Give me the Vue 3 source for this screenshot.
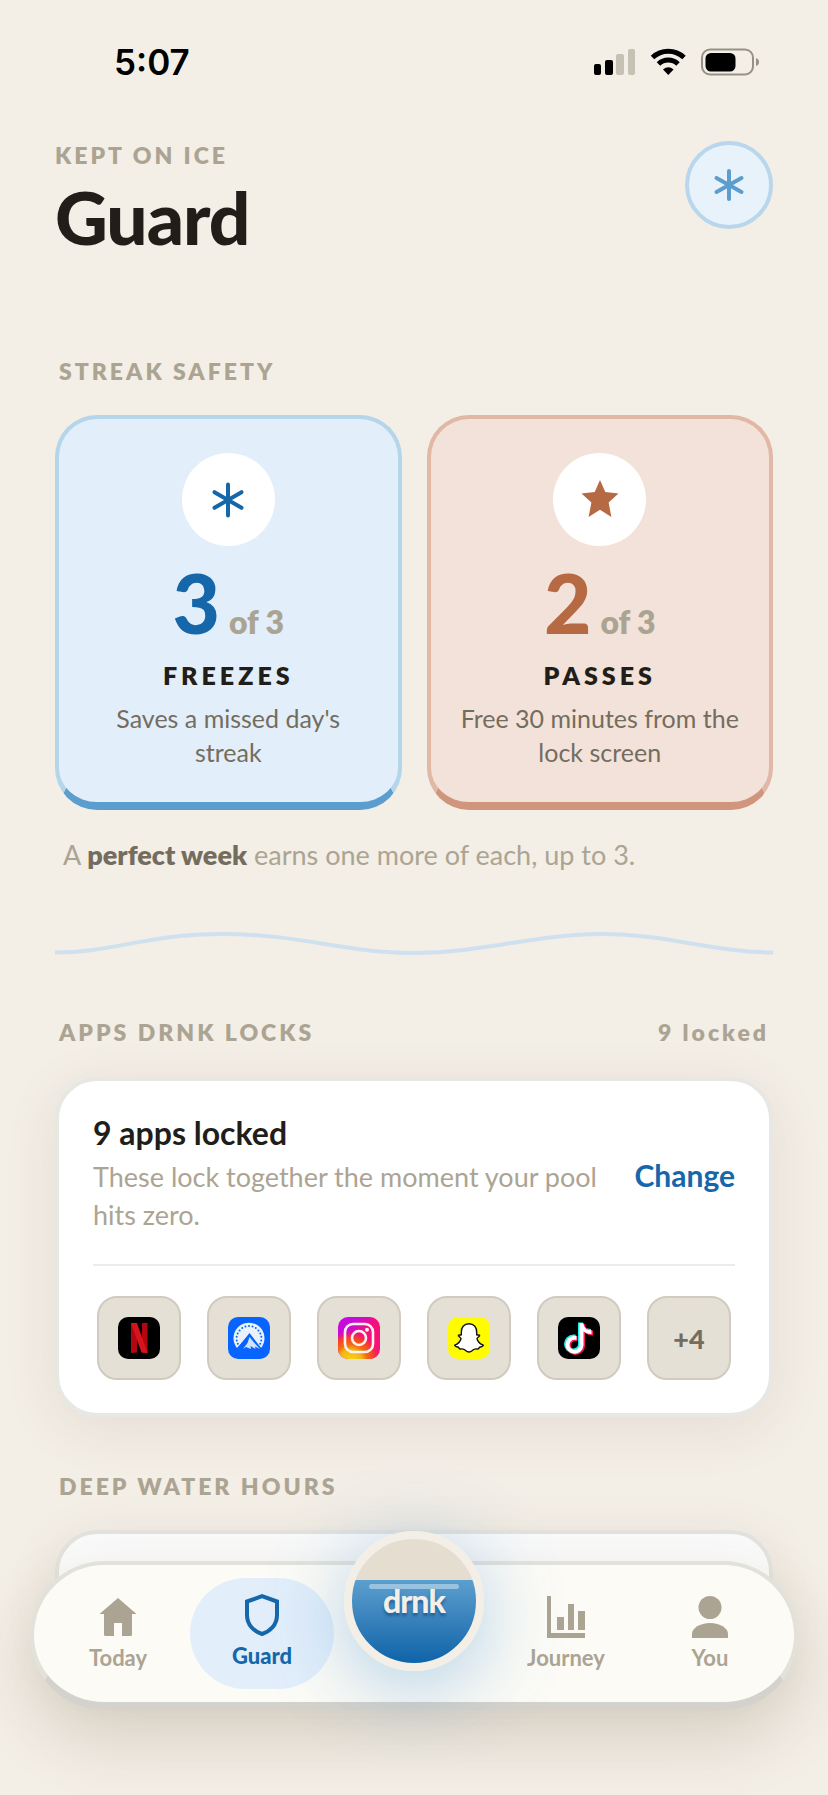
<script setup>
const safety = [
  { id: 'freeze', count: 3, label: 'Freezes', text: "Saves a missed day's streak" },
  { id: 'pass', count: 2, label: 'Passes', text: 'Free 30 minutes from the lock screen' }
]
const dots = Array.from({ length: 15 }, (_, i) => {
  const a = Math.PI * (1.14 - (i * 1.28) / 14)
  return { x: 21 + 12.4 * Math.cos(a), y: 21.5 - 12.4 * Math.sin(a) }
})
</script>

<template>
  <div class="screen">
    <div class="status">
      <span class="time">5:07</span>
      <svg class="status-icons" viewBox="0 0 166 28" aria-hidden="true">
        <rect x="0" y="16" width="7" height="11" rx="2" />
        <rect x="11" y="12" width="8" height="15" rx="2" />
        <rect x="22" y="6" width="8" height="21" rx="2" fill="#c6c1b5" />
        <rect x="34" y="1" width="7" height="26" rx="2" fill="#c6c1b5" />
        <g fill="none" stroke="#000" stroke-width="5">
          <path d="M58.500 9.500 A23 23 0 0 1 90 9.500" />
          <path d="M64.500 16 A14 14 0 0 1 84 16" />
        </g>
        <path d="M69 21.500 Q74.300 17 79.600 21.500 L74.300 27Z" />
        <rect x="108" y="1.500" width="51" height="25" rx="8" fill="none" stroke="#979183" stroke-width="2" />
        <rect x="111.500" y="5" width="30" height="18.500" rx="5.500" />
        <path d="M162 10 Q165 11 165 14 Q165 17 162 18Z" fill="#979183" />
      </svg>
    </div>

    <main class="content">
      <header class="header">
        <div>
          <p class="caps">Kept on ice</p>
          <h1>Guard</h1>
        </div>
        <button class="ice" type="button" aria-label="Freezes">
          <svg viewBox="0 0 36 36"><path d="M18 4V32M5.500 11L30.500 25M30.500 11L5.500 25" /></svg>
        </button>
      </header>

      <h2 class="caps section first">Streak safety</h2>
      <div class="cards">
        <article v-for="s in safety" :key="s.id" class="card" :class="s.id">
          <div class="badge">
            <svg v-if="s.id === 'freeze'" viewBox="0 0 40 40" class="flake"><path d="M20 4.500V35.500M6.500 12.200L33.500 27.800M33.500 12.200L6.500 27.800" /></svg>
            <svg v-else viewBox="0 0 40 40"><path d="M20 0L25.300 12L38.500 13.500L28.600 22.500L31.400 37L20 29.700L8.600 37L11.400 22.500L1.500 13.500L14.700 12Z" /></svg>
          </div>
          <p class="count"><strong>{{ s.count }}</strong> <span>of 3</span></p>
          <h3>{{ s.label }}</h3>
          <p class="text">{{ s.text }}</p>
        </article>
      </div>
      <p class="note">A <strong>perfect week</strong> earns one more of each, up to 3.</p>

      <svg class="wave" viewBox="0 0 718 32" preserveAspectRatio="none" aria-hidden="true">
        <path d="M0 25.500C60 25.500 90 7 168 7S290 26 359 26S480 7 546 7S660 25.500 718 25.500" />
      </svg>

      <div class="row-title">
        <h2 class="caps section">Apps drnk locks</h2>
        <span class="caps locked">9 locked</span>
      </div>
      <section class="panel">
        <div class="panel-head">
          <div>
            <h3>9 apps locked</h3>
            <p>These lock together the moment your pool hits zero.</p>
          </div>
          <button type="button">Change</button>
        </div>
        <ul class="apps">
          <li>
            <svg viewBox="0 0 42 42" role="img" aria-label="Netflix">
              <rect width="42" height="42" rx="10" />
              <path d="M13 6H19V35.500L13 36ZM24 6H29.500V36L24 35.500Z" fill="#b20710" />
              <path d="M13 6H19L29.500 36L23.500 35.500Z" fill="#d5141c" />
            </svg>
          </li>
          <li>
            <svg viewBox="0 0 42 42" role="img" aria-label="Paramount+">
              <rect width="42" height="42" rx="10" fill="#0764ff" />
              <path d="M9 31A15.500 15.500 0 1 1 33 31L21.500 17Z" fill="#e9f2fb" />
              <circle v-for="(d, i) in dots" :key="i" :cx="d.x" :cy="d.y" r="1" fill="#0764ff" />
              <path d="M21.500 16L8 33H14L21 22.500L24 26L22 24.500L19 31H33Z" fill="#0764ff" />
              <path d="M21.500 20L26 25.500L32 32L27 29.500L27.500 32L22.500 29L23 32L18 30L15 32L19.500 26Z" fill="#cfe3f8" />
            </svg>
          </li>
          <li>
            <svg viewBox="0 0 42 42" role="img" aria-label="Instagram">
              <defs>
                <linearGradient id="ig-a" x1="0" y1="0" x2="1" y2="1">
                  <stop offset="0.250" stop-color="#c80bdc" /><stop offset="0.500" stop-color="#f50f78" /><stop offset="0.850" stop-color="#f5127a" />
                </linearGradient>
                <radialGradient id="ig-b" cx="0.300" cy="1.050" r="0.720">
                  <stop offset="0" stop-color="#f8d90c" /><stop offset="0.380" stop-color="#f0b51a" /><stop offset="0.550" stop-color="#f56a10" /><stop offset="0.800" stop-color="#f53a30" /><stop offset="1" stop-color="#f5127a" stop-opacity="0" />
                </radialGradient>
              </defs>
              <rect width="42" height="42" rx="10" fill="url(#ig-a)" />
              <rect width="42" height="42" rx="10" fill="url(#ig-b)" />
              <g fill="none" stroke="#fff2ee" stroke-width="2.600">
                <rect x="7" y="7" width="28" height="28" rx="8" />
                <circle cx="21" cy="21" r="7" />
              </g>
              <circle cx="29" cy="12.800" r="2" fill="#fff2ee" />
            </svg>
          </li>
          <li>
            <svg viewBox="0 0 42 42" role="img" aria-label="Snapchat">
              <rect width="42" height="42" rx="10" fill="#fffc00" />
              <path d="M21 6.800C16 6.800 13 10.300 13.300 15.500V17.800C12.200 18.300 11 17.600 10.400 18.300C9.800 19.300 13 20.500 13 21.700C12.200 24.500 9.700 27 6.700 28.100C6.500 29.700 9.700 29.900 10.700 30.300C11 31.200 11 32 12 32C13 32 14.500 31.500 16.300 32.500C17.700 33.500 19 35 21 35S24.300 33.500 25.700 32.500C27.500 31.500 29 32 30 32S31 31.200 31.300 30.300C32.300 29.900 35.500 29.700 35.300 28.100C32.300 27 29.800 24.500 29 21.700C29 20.500 32.200 19.300 31.600 18.300C31 17.600 29.800 18.300 28.700 17.800V15.500C29 10.300 26 6.800 21 6.800Z" fill="#fff" stroke="#111" stroke-width="1.400" stroke-linejoin="round" />
            </svg>
          </li>
          <li>
            <svg viewBox="0 0 42 42" role="img" aria-label="TikTok">
              <rect width="42" height="42" rx="10" />
              <g fill="none" stroke-width="5">
                <path d="M22.500 5.500V27.500A7 7 0 1 1 15.500 20H17.500M22.500 6C23 11.500 27.500 14.500 33 14.500" stroke="#19f0ee" />
                <path d="M24.500 7V29A7 7 0 1 1 17.500 21.500H19.500M24.500 7.500C25 13 29.500 16 35 16" stroke="#f8195a" />
                <path d="M23.500 6.200V28.200A7 7 0 1 1 16.500 20.700H18.500M23.500 6.700C24 12.200 28.500 15.200 33.500 15.200" stroke="#fff" stroke-width="4" />
              </g>
            </svg>
          </li>
          <li>+4</li>
        </ul>
      </section>

      <h2 class="caps section deep">Deep water hours</h2>
      <section class="panel hours"></section>
    </main>

    <nav class="tabs">
      <a href="#today">
        <svg viewBox="0 0 44 44"><path d="M22 3L40.500 19H36V39.500Q36 41 34.500 41H26V28H18V41H9.500Q8 41 8 39.500V19H3.500Z" /></svg>
        Today
      </a>
      <a href="#guard" class="active" aria-current="page">
        <svg viewBox="0 0 44 44"><path d="M22 3.200L37 8.500V22C37 32 30 38.500 22 41C14 38.500 7 32 7 22V8.500Z" /></svg>
        Guard
      </a>
      <button class="drink" type="button"><span>drnk</span></button>
      <a href="#journey">
        <svg viewBox="0 0 44 44"><path d="M3 1H7V38H41V43H3ZM13 22H20V35H13ZM24 9H30V35H24ZM34 16H41V35H34Z" /></svg>
        Journey
      </a>
      <a href="#you">
        <svg viewBox="0 0 44 44"><circle cx="22" cy="12.500" r="11.500" /><path d="M4 43V39C4 33 12 28 22 28S40 33 40 39V43Z" /></svg>
        You
      </a>
    </nav>
  </div>
</template>

<style>
body { margin: 0; background: #f3eee6; }
</style>

<style scoped>
* { box-sizing: border-box; }
h1, h2, h3, p, ul { margin: 0; padding: 0; }
button { font: inherit; padding: 0; cursor: pointer; }
.screen {
  position: relative;
  min-height: 100vh;
  overflow: hidden;
  background: #f3eee6;
  color: #211d18;
  font-family: Lato, "Open Sans", sans-serif;
}
.status {
  display: flex;
  justify-content: space-between;
  align-items: center;
  padding: 42px 68px 0 114px;
}
.time { font: 600 35px/40px Inter, sans-serif; color: #000; }
.status-icons { width: 166px; height: 28px; }
.content { padding: 59px 55px 0; }
.header { display: flex; justify-content: space-between; align-items: flex-start; }
.caps {
  font-size: 23px;
  line-height: 28px;
  font-weight: 800;
  letter-spacing: 3px;
  text-transform: uppercase;
  color: #aca493;
}
h1 { margin-top: 8px; font-size: 73px; line-height: 80px; font-weight: 900; letter-spacing: -1px; }
.ice {
  width: 88px;
  height: 88px;
  display: grid;
  place-items: center;
  border: 4px solid #b8d6ec;
  border-radius: 50%;
  background: #e8f2fb;
}
.ice svg { width: 36px; fill: none; stroke: #5b9dcc; stroke-width: 4; stroke-linecap: round; }
.section { padding-left: 4px; }
.first { margin-top: 100px; }
.cards { display: grid; grid-template-columns: 1fr 1fr; gap: 25px; margin-top: 30px; }
.card {
  padding: 34px 24px 33px;
  border: 4px solid;
  border-bottom-width: 8px;
  border-radius: 42px;
  text-align: center;
}
.freeze { background: #e2eefa; border-color: #b5d5eb #b5d5eb #5b9dcc; }
.pass { background: #f2e2da; border-color: #e0b8a5 #e0b8a5 #cf967d; }
.badge {
  width: 93px;
  height: 93px;
  margin: 0 auto;
  display: grid;
  place-items: center;
  border-radius: 50%;
  background: #fff;
}
.badge svg { width: 40px; fill: #b56a44; }
.badge .flake { fill: none; stroke: #1567aa; stroke-width: 4; stroke-linecap: round; }
.count {
  display: flex;
  justify-content: center;
  align-items: baseline;
  gap: 9px;
  margin-top: 14px;
  font-size: 32px;
  line-height: 40px;
}
.count strong { font-size: 82px; line-height: 84px; font-weight: 900; color: #1567aa; }
.pass .count strong { color: #b56a44; }
.count span { font-weight: 800; color: #aca493; }
.card h3 { margin-top: 16px; font-size: 25px; line-height: 30px; font-weight: 800; letter-spacing: 4px; text-transform: uppercase; }
.text { margin-top: 11px; font-size: 25px; line-height: 34px; color: #746d5e; }
.note { margin: 29px 0 0 8px; font-size: 27px; line-height: 32px; color: #aca493; }
.note strong { font-weight: 800; color: #746d5e; }
.wave { display: block; width: 100%; height: 32px; margin-top: 56px; }
.wave path { fill: none; stroke: #cfe1ee; stroke-width: 4; }
.row-title { display: flex; justify-content: space-between; margin-top: 59px; }
.locked { padding-right: 4px; text-transform: none; }
.panel {
  margin-top: 31px;
  padding: 34px 34px 33px;
  border: 4px solid #e7e7e4;
  border-radius: 42px;
  background: #fff;
  box-shadow: 0 12px 56px rgba(90, 70, 40, 0.09);
}
.panel-head {
  display: flex;
  align-items: center;
  justify-content: space-between;
  gap: 32px;
  padding-bottom: 30px;
  border-bottom: 2px solid #ececea;
}
.panel h3 { font-size: 32px; line-height: 36px; font-weight: 700; }
.panel p { margin-top: 7px; font-size: 27px; line-height: 38px; color: #aca493; }
.panel-head button { border: 0; background: none; color: #1567aa; font-size: 30px; line-height: 36px; font-weight: 700; }
.apps { display: flex; justify-content: space-between; padding: 30px 4px 0; list-style: none; }
.apps li {
  width: 84px;
  height: 84px;
  display: grid;
  place-items: center;
  border: 2px solid #d1cbbf;
  border-radius: 20px;
  background: #e5e0d6;
  color: #746d5e;
  font-size: 27px;
  font-weight: 900;
}
.apps svg { width: 42px; height: 42px; }
.deep { margin-top: 55px; }
.hours { margin-top: 30px; height: 140px; background: #fafafa; border-color: #e3e3dd; }
.tabs {
  position: absolute;
  left: 30px;
  right: 30px;
  bottom: 85px;
  display: flex;
  justify-content: space-between;
  padding: 13px 12px;
  border: 4px solid #e2e2db;
  border-bottom: 8px solid #d4d2cc;
  border-radius: 75px;
  background: #fcfbf6;
  box-shadow: 0 28px 64px rgba(90, 70, 40, 0.18);
}
.tabs a {
  flex: 0 1 144px;
  height: 111px;
  display: flex;
  flex-direction: column;
  align-items: center;
  padding-top: 17px;
  gap: 6px;
  border-radius: 56px;
  color: #aca493;
  font-size: 22px;
  line-height: 26px;
  font-weight: 700;
  text-decoration: none;
}
.tabs svg { width: 44px; height: 44px; fill: currentColor; }
.tabs .active { padding-top: 15px; color: #1567aa; background: #e2eefa; font-weight: 900; }
.active svg { fill: none; stroke: currentColor; stroke-width: 4; }
.drink {
  position: relative;
  flex: none;
  width: 140px;
  height: 140px;
  margin: -47px 10px -28px;
  border: 8px solid #f3eee6;
  border-radius: 50%;
  background: linear-gradient(#e6ddd1 0 41px, #5b9fce 41px, #4088bf 72px, #1266aa 120px);
  color: #f3eee6;
  font-size: 32px;
  line-height: 36px;
  font-weight: 900;
  letter-spacing: -1px;
  text-shadow: 0 3px 3px rgba(10, 70, 130, 0.6);
  box-shadow: 0 16px 80px rgba(70, 145, 210, 0.42);
}
.drink::before {
  content: "";
  position: absolute;
  top: 45px;
  left: 17px;
  right: 17px;
  height: 5px;
  border-radius: 3px;
  background: rgba(255, 255, 255, 0.4);
}
.drink span { position: relative; }
</style>
